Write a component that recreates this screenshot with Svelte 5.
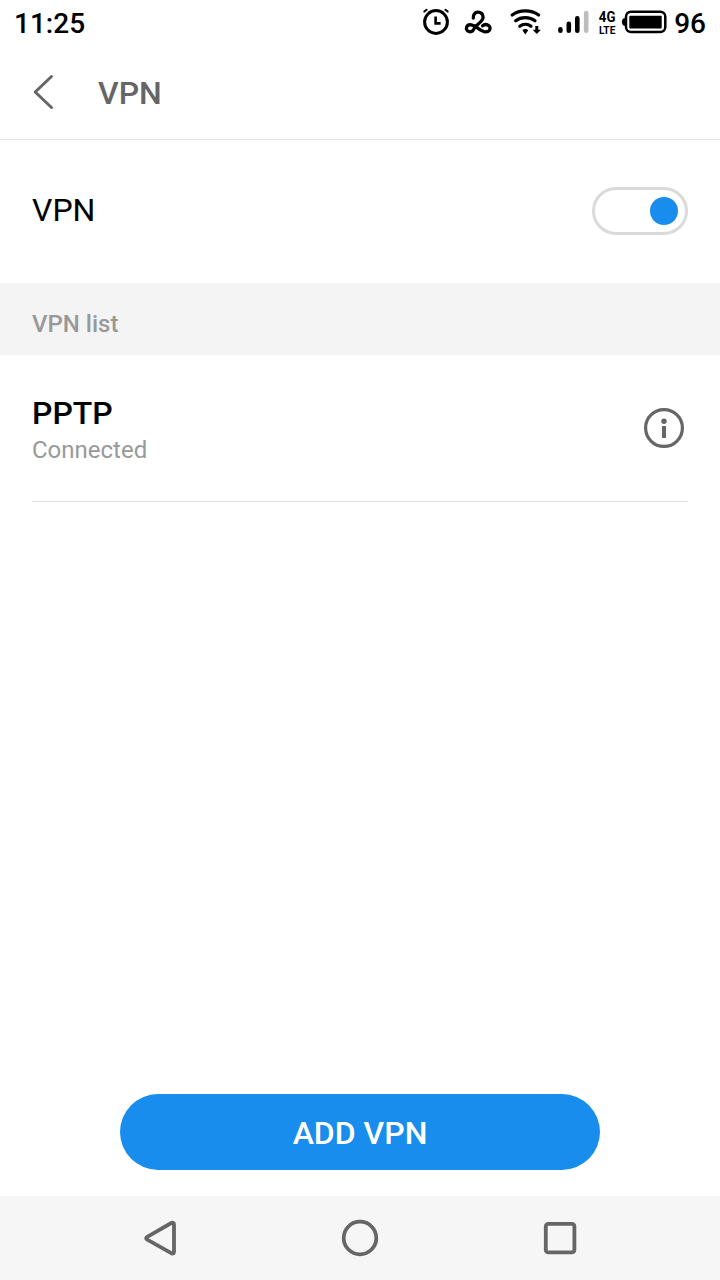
<script>
  let enabled = true

  const connections = [
    { name: 'PPTP', status: 'Connected' }
  ]
</script>

<div class="screen">
  <div class="status">
    <span class="clock">11:25</span>
    <div class="status-icons">
      <svg width="200" height="45" viewBox="420 0 200 45" fill="none" stroke="#000" stroke-linecap="round" stroke-linejoin="round">
        <!-- alarm -->
        <circle cx="436" cy="22" r="11.4" stroke-width="3" />
        <path d="M435.6 16.6v6.8h5" stroke-width="2.6" stroke-linecap="butt" stroke-linejoin="miter" />
        <path d="M424.3 11.6l2.3-1.9M447.7 11.6l-2.3-1.9" stroke-width="2" />
        <!-- knot -->
        <path d="M473.3 18C472.3 10.6 483.3 10.2 483.1 17.3C483 22.3 475.8 24.2 473.8 29.2C471.8 33.7 465.2 31.6 466.6 27.2C468.3 23 473.6 25 477.2 27.8C480.8 30.6 486.2 33.8 489.4 30.3C492 26.4 486.2 22.7 482.6 25.8" stroke-width="3.3" />
        <!-- wifi -->
        <path d="M512.2 15C519.5 9.6 531 9.6 538.6 15M515.7 20.7C521 16.5 529.8 16.5 535 20.7M519.8 26.2C523 23.6 527.8 23.6 531 26.2" stroke-width="3.2" />
        <path d="M522.5 30.4c1.2-1.9 4.4-1.9 5.6 0l-2.8 4z" fill="#000" stroke="none" />
        <path d="M535.3 26h3v3.8h2.6l-4.1 4.1-4.1-4.1h2.6z" fill="#000" stroke="none" />
        <!-- signal -->
        <path d="M560.4 29.2v1.6M568.8 23.8v7M577.3 18.2v12.6" stroke-width="4.6" />
        <path d="M586.2 13v17.8" stroke="#bdbdbd" stroke-width="4.6" />
        <text class="gen" x="598.8" y="22.2" textLength="16.6" lengthAdjust="spacingAndGlyphs">4G</text>
        <text class="lte" x="599" y="34" textLength="16.4" lengthAdjust="spacingAndGlyphs">LTE</text>
      </svg>
      <svg width="50" height="45" viewBox="620 0 50 45">
        <rect x="626" y="11.7" width="39.3" height="20.4" rx="5" fill="none" stroke="#000" stroke-width="2.5" />
        <path d="M625 18.3h-1.2c-2.6 1.6-2.6 5.8 0 7.4h1.2z" />
        <rect x="629.3" y="15.7" width="32.4" height="12.7" rx="1" />
      </svg>
    </div>
    <span class="battery">96</span>
  </div>

  <header>
    <svg width="24" height="40" viewBox="0 0 24 40" fill="none" stroke="#666" stroke-width="3" stroke-linecap="round" stroke-linejoin="round">
      <path d="M19.5 4.5L3.2 20l16.3 15.5" />
    </svg>
    <h1>VPN</h1>
  </header>

  <div class="row">
    <span>VPN</span>
    <button class="switch" class:on={enabled} aria-label="VPN" on:click={() => enabled = !enabled}>
      <i></i>
    </button>
  </div>

  <h2>VPN list</h2>

  {#each connections as item}
  <div class="item">
    <div class="info">
      <div class="name">{item.name}</div>
      <div class="state">{item.status}</div>
    </div>
    <svg width="40" height="40" viewBox="0 0 40 40" fill="#666">
      <circle cx="20" cy="20" r="18.4" fill="none" stroke="#666" stroke-width="3.2" />
      <circle cx="20" cy="13.3" r="2.7" />
      <path d="M18 18h4v12h-4z" />
    </svg>
  </div>
  {/each}

  <div class="bottom">
    <button class="add">ADD VPN</button>
  </div>

  <nav>
    <svg width="40" height="40" viewBox="0 0 40 40">
      <path d="M6.8 19.2L31.3 5q2.7-1 2.7 1.7v27q0 2.7-2.7 1.5L6.8 21.3q-1.3-1 0-2.1z" />
    </svg>
    <svg width="40" height="40" viewBox="0 0 40 40">
      <circle cx="20" cy="20" r="16.3" />
    </svg>
    <svg width="40" height="40" viewBox="0 0 40 40">
      <rect x="5.8" y="5.8" width="28.6" height="28.6" rx="2.5" />
    </svg>
  </nav>
</div>

<style>
:global(body) {
  margin: 0;
  background: #fff;
}
.screen {
  width: 720px;
  height: 1280px;
  display: flex;
  flex-direction: column;
  font-family: Roboto, "Liberation Sans", sans-serif;
  color: #000;
  background: #fff;
  overflow: hidden;
}
svg {
  display: block;
  flex: none;
}
.status {
  height: 45px;
  display: flex;
  padding: 0 14px;
  font-size: 28px;
  font-weight: 500;
  line-height: 47px;
}
.status-icons {
  display: flex;
  margin-left: auto;
  margin-right: 4px;
}
.gen, .lte {
  fill: #000;
  stroke: none;
  font-weight: 700;
}
.gen {
  font-size: 14.5px;
}
.lte {
  font-size: 11px;
}
header {
  height: 94px;
  box-sizing: content-box;
  border-bottom: 1px solid #e2e2e2;
  display: flex;
  align-items: center;
  padding-left: 32px;
}
h1 {
  margin: 2px 0 0 42px;
  font-size: 32px;
  font-weight: 500;
  color: #666;
}
.row {
  height: 141px;
  display: flex;
  align-items: center;
  justify-content: space-between;
  padding: 0 32px 2px;
  font-size: 32px;
}
.row span {
  margin-bottom: 2px;
}
.switch {
  width: 96px;
  height: 48px;
  box-sizing: border-box;
  border: 3px solid #dadada;
  border-radius: 24px;
  background: #fff;
  padding: 0 7px;
  display: flex;
  align-items: center;
}
.switch i {
  width: 28px;
  height: 28px;
  border-radius: 50%;
  background: #bbb;
}
.switch.on {
  justify-content: flex-end;
}
.switch.on i {
  background: #198ded;
}
h2 {
  margin: 0;
  height: 72px;
  line-height: 82px;
  padding-left: 32px;
  background: #f4f4f4;
  color: #999;
  font-size: 24px;
  font-weight: 500;
}
.item {
  height: 146px;
  margin: 0 32px;
  padding-right: 4px;
  display: flex;
  align-items: center;
  justify-content: space-between;
  border-bottom: 1px solid #e2e2e2;
}
.info {
  padding-top: 4px;
}
.name {
  font-size: 32px;
  font-weight: 500;
  line-height: 40px;
}
.state {
  font-size: 24px;
  line-height: 34px;
  color: #999;
}
.bottom {
  margin-top: auto;
  display: flex;
  justify-content: center;
  padding-bottom: 26px;
}
.add {
  width: 480px;
  height: 76px;
  border: 0;
  border-radius: 38px;
  padding: 1px 0 0;
  background: #198ded;
  color: #fff;
  font: 500 32px Roboto, "Liberation Sans", sans-serif;
}
nav {
  height: 84px;
  background: #f6f6f6;
  display: flex;
  justify-content: center;
  align-items: center;
  gap: 160px;
}
nav svg {
  fill: none;
  stroke: #666;
  stroke-width: 3.8;
  stroke-linejoin: round;
}
</style>
